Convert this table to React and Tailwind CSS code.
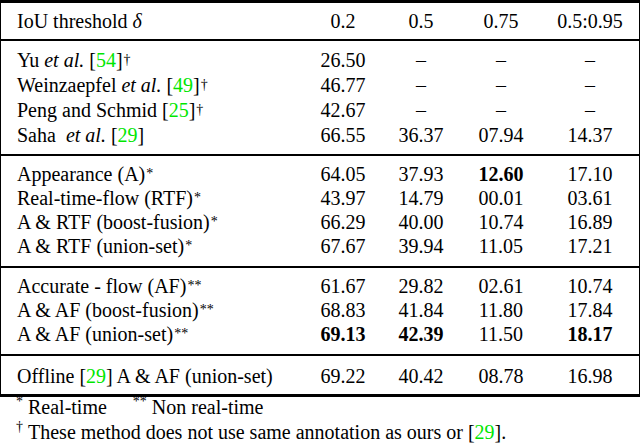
import React from 'react';

// ── Table data ───────────────────────────────────────────────────────────────

const Ref = ({ n }) => <span className="text-[#00e600]">{n}</span>;
const EtAl = () => <i>et al.</i>;
const Sup = ({ children }) => (
  <sup className="text-[14px] relative top-[-3px] ml-[1px]">{children}</sup>
);

const GROUPS = [
  {
    rowH: 'h-[25px]',
    pad: 'pt-[6px] pb-[7px]',
    rows: [
      { label: <>Yu <EtAl /> [<Ref n="54" />]<Sup>†</Sup></>, vals: ['26.50', '–', '–', '–'] },
      { label: <>Weinzaepfel <EtAl /> [<Ref n="49" />]<Sup>†</Sup></>, vals: ['46.77', '–', '–', '–'] },
      { label: <>Peng and Schmid [<Ref n="25" />]<Sup>†</Sup></>, vals: ['42.67', '–', '–', '–'] },
      { label: <>Saha&nbsp; <EtAl /> [<Ref n="29" />]</>, vals: ['66.55', '36.37', '07.94', '14.37'] },
    ],
  },
  {
    rowH: 'h-[24px]',
    pad: 'pt-[6px] pb-[8px]',
    rows: [
      { label: <>Appearance (A)<Sup>*</Sup></>, vals: ['64.05', '37.93', '12.60', '17.10'], bold: [2] },
      { label: <>Real-time-flow (RTF)<Sup>*</Sup></>, vals: ['43.97', '14.79', '00.01', '03.61'] },
      { label: <>A &amp; RTF (boost-fusion)<Sup>*</Sup></>, vals: ['66.29', '40.00', '10.74', '16.89'] },
      { label: <>A &amp; RTF (union-set)<Sup>*</Sup></>, vals: ['67.67', '39.94', '11.05', '17.21'] },
    ],
  },
  {
    rowH: 'h-[24px]',
    pad: 'pt-[6px] pb-[8px]',
    rows: [
      { label: <>Accurate - flow (AF)<Sup>**</Sup></>, vals: ['61.67', '29.82', '02.61', '10.74'] },
      { label: <>A &amp; AF (boost-fusion)<Sup>**</Sup></>, vals: ['68.83', '41.84', '11.80', '17.84'] },
      { label: <>A &amp; AF (union-set)<Sup>**</Sup></>, vals: ['69.13', '42.39', '11.50', '18.17'], bold: [0, 1, 3] },
    ],
  },
  {
    rowH: 'h-[24px]',
    pad: 'pt-[8px] pb-[6px]',
    rows: [
      { label: <>Offline [<Ref n="29" />] A &amp; AF (union-set)</>, vals: ['69.22', '40.42', '08.78', '16.98'] },
    ],
  },
];

// column grid — label column then four centred number columns
const COLS = 'grid grid-cols-[300px_84px_72px_88px_90px_1fr] items-center';

// ─────────────────────────────────────────────────────────────────────────────

const Row = ({ label, vals, bold = [], h }) => (
  <div className={`${COLS} ${h}`}>
    <div className="pl-4 whitespace-nowrap">{label}</div>
    {vals.map((v, i) => (
      <div key={i} className={`text-center ${bold.includes(i) ? 'font-bold' : ''}`}>
        {v}
      </div>
    ))}
  </div>
);

export default function App() {
  return (
    <div className="w-[640px] h-[444px] bg-white text-black [font-family:'Liberation_Serif','Times_New_Roman',serif] text-[20px] leading-none overflow-hidden">

      {/* Boxed table */}
      <div className="border-x border-black">
        <div className="h-[3px] bg-black" />

        {/* Header */}
        <div className={`${COLS} h-[36px]`}>
          <div className="pl-4">IoU threshold <i>δ</i></div>
          <div className="text-center">0.2</div>
          <div className="text-center">0.5</div>
          <div className="text-center">0.75</div>
          <div className="text-center">0.5:0.95</div>
        </div>

        {GROUPS.map((g, gi) => (
          <div key={gi}>
            <div className="h-[2px] bg-black" />
            <div className={g.pad}>
              {g.rows.map((r, ri) => (
                <Row key={ri} {...r} h={g.rowH} />
              ))}
            </div>
          </div>
        ))}

        <div className="h-[3px] bg-black" />
      </div>

      {/* Footnotes */}
      <div className="pl-4 -mt-[3px]">
        <div className="h-[25px] flex items-center">
          <span className="text-[14px] relative top-[-5px] mr-[5px]">*</span>
          <span>Real-time</span>
          <span className="text-[14px] relative top-[-5px] ml-[26px] mr-[5px]">**</span>
          <span>Non real-time</span>
        </div>
        <div className="h-[25px] flex items-center">
          <span className="text-[14px] relative top-[-5px] mr-[5px]">†</span>
          <span>These method does not use same annotation as ours or [<Ref n="29" />].</span>
        </div>
      </div>
    </div>
  );
}
